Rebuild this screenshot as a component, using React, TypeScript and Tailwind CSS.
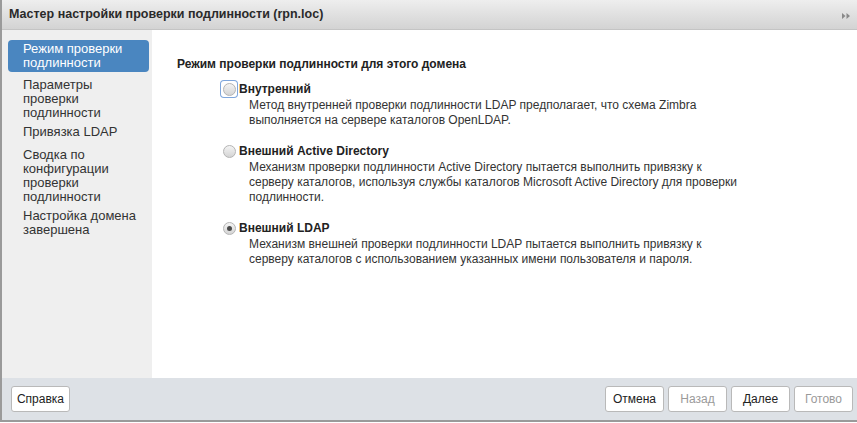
import React from 'react';

const steps = [
  { label: 'Режим проверки подлинности', active: true, mb: 'mb-[4px]' },
  { label: 'Параметры проверки подлинности', mb: 'mb-[1px]' },
  { label: 'Привязка LDAP', mb: 'mb-[5px]' },
  { label: 'Сводка по конфигурации проверки подлинности', mb: 'mb-[1px]' },
  { label: 'Настройка домена завершена', mb: 'mb-[1px]' },
];

const options = [
  {
    title: 'Внутренний',
    desc: 'Метод внутренней проверки подлинности LDAP предполагает, что схема Zimbra выполняется на сервере каталогов OpenLDAP.',
    checked: false,
    focused: true,
  },
  {
    title: 'Внешний Active Directory',
    desc: 'Механизм проверки подлинности Active Directory пытается выполнить привязку к серверу каталогов, используя службы каталогов Microsoft Active Directory для проверки подлинности.',
    checked: false,
  },
  {
    title: 'Внешний LDAP',
    desc: 'Механизм внешней проверки подлинности LDAP пытается выполнить привязку к серверу каталогов с использованием указанных имени пользователя и пароля.',
    checked: true,
  },
];

const Radio: React.FC<{ checked?: boolean; focused?: boolean }> = ({ checked, focused }) => (
  <span className={`flex h-[16px] w-[16px] items-center justify-center rounded-[3px] ${focused ? 'ring-1 ring-[#7ea6dc]' : ''}`}>
    <span className="flex h-[13px] w-[13px] items-center justify-center rounded-full border border-[#b4b4b4] bg-gradient-to-b from-[#f4f4f4] to-[#d4d4d4]">
      {checked && <span className="h-[5px] w-[5px] rounded-full bg-[#4a4a4a]" />}
    </span>
  </span>
);

const Btn: React.FC<{ children: React.ReactNode; disabled?: boolean }> = ({ children, disabled }) => (
  <button className={`h-[26px] w-[59px] rounded-[3px] border border-[#b9b9b9] bg-white text-[12px] ${disabled ? 'text-[#9a9a9a]' : 'text-[#222]'}`}>
    {children}
  </button>
);

export default function App() {
  return (
    <div className="h-[423px] w-[857px] overflow-hidden bg-white font-['Liberation_Sans',Arial,sans-serif] text-[#222]">
      <div className="flex h-[422px] flex-col border-b-2 border-l-2 border-[#9a9a9a]">
        <div className="flex h-[30px] shrink-0 items-center justify-between border-b border-[#c4c4c4] bg-gradient-to-b from-[#eeeeee] to-[#d3d3d3] pl-[7px] pr-[6px]">
          <span className="text-[12.5px] font-bold text-[#2a2a2a]">Мастер настройки проверки подлинности (rpn.loc)</span>
          <svg width="10" height="8" viewBox="0 0 10 8" className="mt-[3px]">
            <path d="M1 1 L4.5 4 L1 7 Z M5.5 1 L9 4 L5.5 7 Z" fill="#8a8a8a" />
          </svg>
        </div>
        <div className="flex min-h-0 flex-1">
          <div className="w-[150px] shrink-0 bg-[#efefef] pt-[10px] pl-[6px] pr-[3px]">
            {steps.map((s) => (
              <div
                key={s.label}
                className={`rounded-[4px] py-[2px] pl-[15px] pr-[6px] text-[13px] leading-[14px] ${s.active ? 'bg-[#4a86c0] text-white' : 'text-[#333]'} ${s.mb}`}
              >
                {s.label}
              </div>
            ))}
          </div>
          <div className="flex-1 bg-white pl-[25px] pt-[25px]">
            <div className="text-[12px] font-bold text-[#222]">Режим проверки подлинности для этого домена</div>
            <div className="mt-[7px] flex flex-col gap-[14px] pl-[44px]">
              {options.map((o) => (
                <div key={o.title}>
                  <div className="flex items-center gap-[2px]">
                    <Radio checked={o.checked} focused={o.focused} />
                    <span className="text-[12px] font-bold text-[#222]">{o.title}</span>
                  </div>
                  <div className="w-[520px] pl-[28px] text-[12px] leading-[15px] text-[#333]">{o.desc}</div>
                </div>
              ))}
            </div>
          </div>
        </div>
        <div className="flex h-[42px] shrink-0 items-center justify-between bg-[#dde1e6] pl-[9px] pr-[4px]">
          <Btn>Справка</Btn>
          <div className="flex gap-[4px]">
            <Btn>Отмена</Btn>
            <Btn disabled>Назад</Btn>
            <Btn>Далее</Btn>
            <Btn disabled>Готово</Btn>
          </div>
        </div>
      </div>
    </div>
  );
}
